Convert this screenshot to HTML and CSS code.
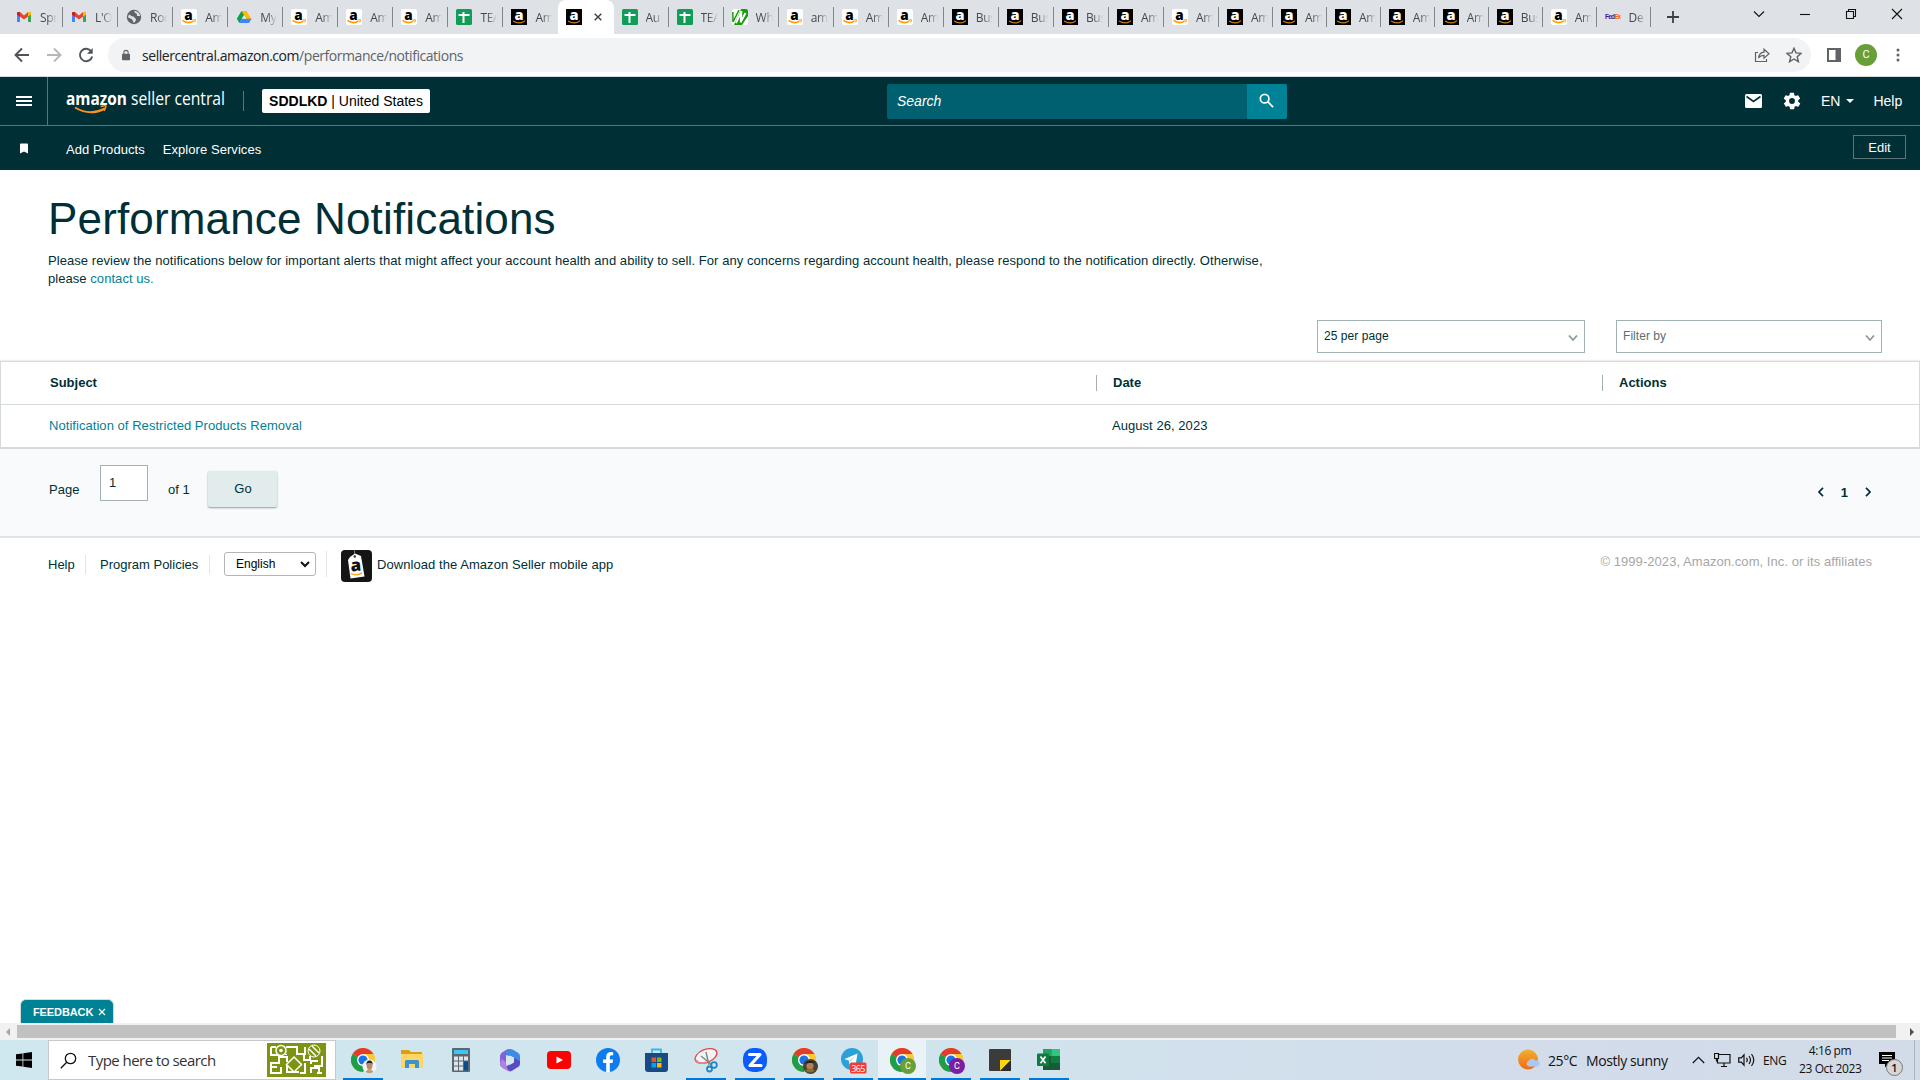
FILE: index.html
```html
<!DOCTYPE html>
<html lang="en">
<head>
  <meta charset="UTF-8">
  <title>Performance Notifications</title>
  <link rel="stylesheet" href="styles.css">
</head>
<body>
  <!-- shared icons -->
  <svg class="sprite" width="0" height="0">
    <symbol id="i-gmail" viewBox="0 0 16 16">
      <path d="M1 4v9h3V7z" fill="#4285f4"/>
      <path d="M12 7v6h3V4z" fill="#34a853"/>
      <path d="M1 3.500L4 3l4 3.400L12 3l3 .5v2L8 10.600 1 5.500z" fill="#ea4335"/>
      <path d="M12 3l3 .3V5.500L12 7.700z" fill="#fbbc04"/>
      <path d="M1 3.300L4 3v4.700L1 5.500z" fill="#c5221f"/>
    </symbol>
    <symbol id="i-globe" viewBox="0 0 16 16">
      <circle cx="8" cy="8" r="7.200" fill="#5f6368"/>
      <path d="M3 5.500c2 .5 2 2 4 2s1 2 2.500 2 0 3-1.500 4.500C6.500 12 7 11 5.500 10S2 9 2 8zM8.500 2c-.5 2 1 2 2 2.500S10 7 12 7s2 .5 2.200 0C14 4.500 11.500 2 8.500 2z" fill="#dee1e6"/>
    </symbol>
    <symbol id="i-amz" viewBox="0 0 16 16">
      <rect width="16" height="16" rx="2" fill="#fff"/>
      <text x="7.500" y="10.500" class="glyph" font-size="13.500" fill="#000">a</text>
      <path d="M1.500 11.300q5.500 4.200 11 .8" fill="none" stroke="#f90" stroke-width="1.500"/>
      <path d="M11.500 11l3-.3-.7 2.800" fill="none" stroke="#f90"/>
    </symbol>
    <symbol id="i-amzb" viewBox="0 0 16 16">
      <rect width="16" height="16" fill="#000"/>
      <text x="8" y="10.800" class="glyph" font-size="14.500" fill="#fff">a</text>
      <path d="M2 12q5.500 3.600 11 .5l.8-1" fill="none" stroke="#c47a1a" stroke-width="1.200"/>
    </symbol>
    <symbol id="i-drive" viewBox="0 0 16 16">
      <path d="M5.500 2h5L8 6.300 3.300 14 .8 9.800z" fill="#0f9d58"/>
      <path d="M5.500 2h5l5 8h-5z" fill="#ffba00"/>
      <path d="M5.500 9.800h10L13 14H3.200z" fill="#4285f4"/>
      <path d="M8 6.200l2.200 3.600H5.800z" fill="#dee1e6"/>
    </symbol>
    <symbol id="i-sheet" viewBox="0 0 16 16">
      <rect width="16" height="16" rx="1.500" fill="#0f9d58"/>
      <path d="M2.500 6h11M7.500 3v11" stroke="#fff" stroke-width="2"/>
    </symbol>
    <symbol id="i-w" viewBox="0 0 16 16">
      <rect width="16" height="16" rx="2" fill="#fff"/>
      <path d="M9 0h5a2 2 0 0 1 2 2v5l-6 9H2l3-7z" fill="#1a9a0c"/>
      <path d="M.8 3L1 13M1 13L7 1" fill="none" stroke="#1a9a0c" stroke-width="1.500"/>
      <path d="M9.500 2L4 14M13.500 4L8.500 13.500M9.500 2l-.8 11" fill="none" stroke="#fff" stroke-width="1.900"/>
    </symbol>
    <symbol id="i-fedex" viewBox="0 0 16 16">
      <text x="0" y="10.300" font-family="Liberation Sans" font-weight="bold" font-size="6.500" textLength="10" fill="#4d148c">Fed</text>
      <text x="9.500" y="10.300" font-family="Liberation Sans" font-weight="bold" font-size="6.500" textLength="6.500" fill="#f60">Ex</text>
    </symbol>
    <symbol id="i-chrome" viewBox="0 0 24 24">
      <circle cx="12" cy="12" r="12" fill="#fbbc04"/>
      <path d="M12 12L1.600 6A12 12 0 0 1 22.400 6z" fill="#e33b2e"/>
      <path d="M12 12L1.600 6A12 12 0 0 0 12 24l5.500-9z" fill="#1e9e4a"/>
      <path d="M12 6h10.400A12 12 0 0 1 12 24l5.500-9z" fill="#fcc934"/>
      <circle cx="12" cy="12" r="6" fill="#fff"/>
      <circle cx="12" cy="12" r="4.600" fill="#1a73e8"/>
    </symbol>
  </svg>

  <div class="tabs">
    <div class="tab"><svg><use href="#i-gmail"/></svg><span>Spr</span></div>
    <div class="tab"><svg><use href="#i-gmail"/></svg><span>L'O</span></div>
    <div class="tab"><svg><use href="#i-globe"/></svg><span>Roc</span></div>
    <div class="tab"><svg><use href="#i-amz"/></svg><span>Am</span></div>
    <div class="tab"><svg><use href="#i-drive"/></svg><span>My</span></div>
    <div class="tab"><svg><use href="#i-amz"/></svg><span>Am</span></div>
    <div class="tab"><svg><use href="#i-amz"/></svg><span>Am</span></div>
    <div class="tab"><svg><use href="#i-amz"/></svg><span>Am</span></div>
    <div class="tab"><svg><use href="#i-sheet"/></svg><span>TEA</span></div>
    <div class="tab before-active"><svg><use href="#i-amzb"/></svg><span>Am</span></div>
    <div class="tab active"><svg><use href="#i-amzb"/></svg><svg class="tab-close" viewBox="0 0 8 8"><path d="M.7.7l6.600 6.600M7.300.7L.7 7.300"/></svg></div>
    <div class="tab"><svg><use href="#i-sheet"/></svg><span>Au</span></div>
    <div class="tab"><svg><use href="#i-sheet"/></svg><span>TEA</span></div>
    <div class="tab"><svg><use href="#i-w"/></svg><span>Wh</span></div>
    <div class="tab"><svg><use href="#i-amz"/></svg><span>am</span></div>
    <div class="tab"><svg><use href="#i-amz"/></svg><span>Am</span></div>
    <div class="tab"><svg><use href="#i-amz"/></svg><span>Am</span></div>
    <div class="tab"><svg><use href="#i-amzb"/></svg><span>Bus</span></div>
    <div class="tab"><svg><use href="#i-amzb"/></svg><span>Bus</span></div>
    <div class="tab"><svg><use href="#i-amzb"/></svg><span>Bus</span></div>
    <div class="tab"><svg><use href="#i-amzb"/></svg><span>Am</span></div>
    <div class="tab"><svg><use href="#i-amz"/></svg><span>Am</span></div>
    <div class="tab narrow"><svg><use href="#i-amzb"/></svg><span>Am</span></div>
    <div class="tab narrow"><svg><use href="#i-amzb"/></svg><span>Am</span></div>
    <div class="tab narrow"><svg><use href="#i-amzb"/></svg><span>Am</span></div>
    <div class="tab narrow"><svg><use href="#i-amzb"/></svg><span>Am</span></div>
    <div class="tab narrow"><svg><use href="#i-amzb"/></svg><span>Am</span></div>
    <div class="tab narrow"><svg><use href="#i-amzb"/></svg><span>Bus</span></div>
    <div class="tab narrow"><svg><use href="#i-amz"/></svg><span>Am</span></div>
    <div class="tab narrow"><svg><use href="#i-fedex"/></svg><span>De</span></div>
    <svg class="new-tab" viewBox="0 0 12 12"><path d="M6 0v12M0 6h12"/></svg>
    <div class="win-btns">
      <svg viewBox="0 0 12 12"><path d="M1 3.500l5 5 5-5"/></svg>
      <svg viewBox="0 0 12 12"><path d="M1 6.500h10"/></svg>
      <svg viewBox="0 0 12 12"><path d="M1.500 3.500h7v7h-7zM3.500 3.500v-2h7v7h-2"/></svg>
      <svg viewBox="0 0 12 12"><path d="M1 1l10 10M11 1L1 11"/></svg>
    </div>
  </div>

  <div class="toolbar">
    <svg class="nav" viewBox="0 0 16 16"><path d="M15 8H2M8 1.500L1.500 8 8 14.500"/></svg>
    <svg class="nav off" viewBox="0 0 16 16"><path d="M1 8h13M8 1.500L14.500 8 8 14.500"/></svg>
    <svg class="nav" viewBox="0 0 16 16"><path d="M13.300 4.500A6.200 6.200 0 1 0 14.200 9.500"/><path d="M14.700 1v5.700H9z" class="solid"/></svg>
    <div class="omnibox">
      <svg class="lock" viewBox="0 0 10 13"><path d="M1 5h8a1 1 0 0 1 1 1v6a1 1 0 0 1-1 1H1a1 1 0 0 1-1-1V6a1 1 0 0 1 1-1z" fill="#5f6368"/><path d="M2.300 5.500V3.400a2.700 2.700 0 0 1 5.400 0v2.100" fill="none" stroke="#5f6368" stroke-width="1.300"/></svg>
      <span class="url"><b>sellercentral.amazon.com</b>/performance/notifications</span>
      <svg class="share" viewBox="0 0 16 16"><path d="M4 5.500H1.500v9h11V12"/><path d="M4.500 11C5 7.500 7 5.500 10 5.200V2.200l5 4.600-5 4.400V8.300c-2.500 0-4.200.9-5.500 2.700z"/></svg>
      <svg class="star" viewBox="0 0 16 16"><path d="M8 1.300l2 4.600 5 .5-3.800 3.300 1.200 5L8 12l-4.400 2.700 1.200-5L1 6.400l5-.5z"/></svg>
    </div>
    <svg class="panel" viewBox="0 0 14 14"><path d="M1 1h12v12H1z" fill="none" stroke="#5f6368" stroke-width="2"/><path d="M8.500 1H13v12H8.500z" fill="#5f6368"/></svg>
    <span class="avatar">C</span>
    <svg class="dots" viewBox="0 0 4 14"><circle cx="2" cy="2" r="1.500"/><circle cx="2" cy="7" r="1.500"/><circle cx="2" cy="12" r="1.500"/></svg>
  </div>

  <header class="header">
    <div class="burger"><i></i><i></i><i></i></div>
    <svg class="logo" width="164" height="32" viewBox="0 0 164 32">
      <text x="3" y="20" font-weight="700" font-size="18" textLength="61" lengthAdjust="spacingAndGlyphs">amazon</text>
      <text x="68" y="20" font-size="18.500" textLength="94" lengthAdjust="spacingAndGlyphs">seller central</text>
      <path d="M12 22.500q15 9 30 1" fill="none" stroke="#f79421" stroke-width="2"/>
      <path d="M37.500 21.500q6-1.500 5.500 0t-2 4.500" fill="none" stroke="#f79421" stroke-width="1.400"/>
    </svg>
    <span class="logo-line"></span>
    <div class="account"><b>SDDLKD</b> | United States</div>
    <div class="search">
      <span>Search</span>
      <div class="search-btn"><svg viewBox="0 0 16 16"><circle cx="6" cy="6" r="4.600"/><path d="M9.300 9.300l5.700 5.700"/></svg></div>
    </div>
    <svg class="mail" viewBox="0 0 17 14"><rect width="17" height="14" rx="1.500" fill="#fff"/><path d="M1.500 2.500l7 5 7-5" fill="none" stroke="#002f36" stroke-width="1.600"/></svg>
    <svg class="gear" viewBox="0 0 24 24"><path fill="#fff" fill-rule="evenodd" d="M19.400 13a7.500 7.500 0 0 0 0-2l2.100-1.600a.5.5 0 0 0 .1-.6l-2-3.500a.5.5 0 0 0-.6-.2l-2.500 1a7.300 7.300 0 0 0-1.700-1l-.4-2.600a.5.500 0 0 0-.5-.5h-4a.5.500 0 0 0-.5.500L9 5.100a7.300 7.300 0 0 0-1.700 1l-2.500-1a.5.500 0 0 0-.6.200l-2 3.500a.5.500 0 0 0 .1.600L4.600 11a7.500 7.500 0 0 0 0 2l-2.100 1.600a.5.500 0 0 0-.1.600l2 3.500c.1.200.4.300.6.200l2.500-1c.5.400 1.100.7 1.700 1l.4 2.600c0 .3.200.5.500.5h4c.300 0 .5-.2.500-.5l.4-2.600a7.300 7.300 0 0 0 1.700-1l2.500 1c.2.100.5 0 .6-.2l2-3.500a.5.500 0 0 0-.1-.6zM12 15.500a3.500 3.500 0 1 1 0-7 3.500 3.500 0 0 1 0 7z"/></svg>
    <span class="lang">EN<i></i></span>
    <span class="help">Help</span>
  </header>

  <nav class="favs">
    <svg class="bookmark" viewBox="0 0 9 11"><path d="M1 0h7a1 1 0 0 1 1 1v10L4.500 8.800 0 11V1a1 1 0 0 1 1-1z" fill="#fff"/></svg>
    <a>Add Products</a>
    <a>Explore Services</a>
    <button class="edit">Edit</button>
  </nav>

  <main>
    <h1>Performance Notifications</h1>
    <p class="intro">Please review the notifications below for important alerts that might affect your account health and ability to sell. For any concerns regarding account health, please respond to the notification directly. Otherwise,<br>please <a>contact us.</a></p>

    <div class="filters">
      <div class="select">25 per page<svg viewBox="0 0 10 8"><path d="M1 1.500l4 4.500 4-4.500"/></svg></div>
      <div class="select empty">Filter by<svg viewBox="0 0 10 8"><path d="M1 1.500l4 4.500 4-4.500"/></svg></div>
    </div>

    <div class="grid">
      <div class="row head">
        <div>Subject</div>
        <div>Date</div>
        <div>Actions</div>
      </div>
      <div class="row">
        <div><a>Notification of Restricted Products Removal</a></div>
        <div>August 26, 2023</div>
        <div></div>
      </div>
    </div>

    <div class="pager">
      <span class="page-label">Page</span>
      <div class="page-input">1</div>
      <span class="page-of">of 1</span>
      <div class="go">Go</div>
      <div class="pages">
        <svg viewBox="0 0 6 10"><path d="M5 .8L1 5l4 4.200"/></svg>
        <b>1</b>
        <svg viewBox="0 0 6 10"><path d="M1 .8L5 5 1 9.200"/></svg>
      </div>
    </div>
  </main>

  <footer class="footer">
    <span class="f-help">Help</span>
    <span class="f-policy">Program Policies</span>
    <div class="f-lang"><div class="f-select">English<svg viewBox="0 0 10 7"><path d="M1 1l4 4 4-4"/></svg></div></div>
    <svg class="app" width="31" height="32" viewBox="0 0 31 32">
      <rect width="31" height="32" rx="4" fill="#151515"/>
      <path d="M13.500 0v5" stroke="#777"/>
      <path d="M9 7l5-3.500L20 6l3.500 20.500L9.500 28.500 7 10z" fill="#fff"/>
      <circle cx="13.800" cy="6.500" r="1.200" fill="#333"/>
      <text x="15" y="21" class="glyph" font-size="17" fill="#111" transform="rotate(-5 15 18)">a</text>
      <path d="M10 23.500q6 3 11-.8" fill="none" stroke="#f90" stroke-width="1.300"/>
    </svg>
    <span class="f-app">Download the Amazon Seller mobile app</span>
    <span class="copy">© 1999-2023, Amazon.com, Inc. or its affiliates</span>
  </footer>

  <div class="feedback">FEEDBACK<svg viewBox="0 0 8 8"><path d="M1 1l6 6M7 1L1 7"/></svg></div>

  <div class="scrollbar"><i class="left"></i><div class="thumb"></div><i class="right"></i></div>

  <div class="taskbar">
    <div class="start"><svg viewBox="0 0 16 16"><path d="M0 2.300L6.500 1.400v6.200H0zM7.300 1.300L16 0v7.600H7.300zM0 8.400h6.500v6.200L0 13.700zM7.300 8.400H16V16l-8.700-1.200z"/></svg></div>
    <div class="type-here">
      <svg class="mag" viewBox="0 0 17 17"><circle cx="10.500" cy="6.500" r="5.200"/><path d="M6.700 10.300L.8 16.200"/></svg>
      <span>Type here to search</span>
      <svg class="maze" viewBox="0 0 59 34">
        <rect width="59" height="34" fill="#7d9413"/>
        <path d="M4 4h5M4 4v8h8v8H4v10h10v-6M19 4h11v7h8V4M19 12v-1M12 14h8v5M37 11v6h7M20 29h12M38 20v10h-5M43 17v-4M44 30v-5h8v5M55 13v10h-8M55 30h-5M44 21v-3h7M20 21v9M4 24h6" fill="none" stroke="#fff" stroke-width="2"/>
        <circle cx="14" cy="7.500" r="5" fill="#7d9413" stroke="#fff" stroke-width="1.500"/><circle cx="14" cy="7.500" r="1.800" fill="#fff"/>
        <circle cx="47" cy="8" r="6" fill="#7d9413" stroke="#fff"/><path d="M42 6l7 7M45 3l7 7" stroke="#fff" stroke-width="1.500"/>
        <path d="M27 14l7.500 7.500L27 29l-7.500-7.500z" fill="#7d9413" stroke="#fff" stroke-width="1.500"/>
      </svg>
    </div>
    <div class="apps">
      <div class="app-icon open">
        <svg viewBox="0 0 28 28"><use href="#i-chrome" x="2" y="2" width="24" height="24"/><circle cx="20.500" cy="20.500" r="7" fill="#f4f4f4"/><path d="M16.500 25.800q4 3 8 0l-2.500-2.500h-3z" fill="#c49a78"/><ellipse cx="20.500" cy="19.500" rx="2.900" ry="4" fill="#b98a66"/><path d="M17.500 19q-.5-4.500 3-4.500t3 4.500l-1-2h-4z" fill="#222"/></svg>
      </div>
      <div class="app-icon">
        <svg viewBox="0 0 28 28"><path d="M3 4h8l2 2h11v6H3z" fill="#d9a011"/><path d="M3 8h22v14H3z" fill="#fdd667"/><path d="M7 22v-6.500a1.500 1.500 0 0 1 1.500-1.500h11a1.500 1.500 0 0 1 1.500 1.500V22h-4v-4h-6v4z" fill="#3b92d0"/></svg>
      </div>
      <div class="app-icon">
        <svg viewBox="0 0 28 28"><rect x="5" y="2" width="18" height="24" rx="1" fill="#5b6670"/><path d="M7 4h14v4H7z" fill="#3cc6f4"/><path d="M7 10.500h4v4H7zm5 0h4v4h-4zm5 0h4v4h-4zM7 15.500h4v4H7zm5 0h4v4h-4zM7 20.500h4v4H7zm5 0h4v4h-4z" fill="#dfe5ea"/><path d="M17 15.500h4v9h-4z" fill="#0a4c8c"/></svg>
      </div>
      <div class="app-icon">
        <svg viewBox="0 0 28 28"><path d="M14 3q-2-.5-4 1L6 6.500Q4 8 4 10v8q0 2 2 3l4 2 1-2q-2-2-1-5V9z" fill="#8460d8"/><path d="M14 3q2 0 3 .8l5 3Q24 8 24 10v9l-6-3v-4.500L10 9V5.500z" fill="#3f8ae2"/><path d="M24 17q0 3-2 4l-6 3.800q-2 1-4 0L6 21.500l4-1 8-4.500V12l6 3z" fill="#5a4bc2"/><path d="M4 17q0 3 2 4.500l6 3.300q1 .5 2 .5-4-3-4-9L6 13z" fill="#b27fe4"/><path d="M14 9.500l4 2.300v4.600L14 18.700l-4-2.300v-4.600z" fill="#d5e7ee"/></svg>
      </div>
      <div class="app-icon">
        <svg viewBox="0 0 28 28"><rect x="2" y="5" width="24" height="18" rx="4" fill="#f00"/><path d="M11.500 10.500l6.500 3.500-6.500 3.500z" fill="#fff"/></svg>
      </div>
      <div class="app-icon">
        <svg viewBox="0 0 28 28"><circle cx="14" cy="14" r="12" fill="#0d7cf2"/><path d="M12.200 26v-9H9v-3.500h3.200v-2.700c0-3.200 1.800-4.800 4.600-4.800l2.400.2v3h-1.500c-1.400 0-1.900.8-1.900 1.700v2.600h3.300l-.6 3.500h-2.700v9z" fill="#fff"/></svg>
      </div>
      <div class="app-icon">
        <svg viewBox="0 0 28 28"><path d="M9 8V3.500h9V8" fill="none" stroke="#35b8f1" stroke-width="1.800"/><path d="M2 7h23v16a3 3 0 0 1-3 3H5a3 3 0 0 1-3-3z" fill="#184a85"/><path d="M8.500 11.500H13V16H8.500z" fill="#f25022"/><path d="M14 11.500h4.500V16H14z" fill="#7fba00"/><path d="M8.500 17H13v4.500H8.500z" fill="#00a4ef"/><path d="M14 17h4.500v4.500H14z" fill="#ffb900"/></svg>
      </div>
      <div class="app-icon open">
        <svg viewBox="0 0 28 28"><ellipse cx="14" cy="10" rx="11.500" ry="6.500" transform="rotate(-22 14 10)" fill="#f5f5f7" stroke="#e4474d" stroke-width="1.300"/><path d="M4 14q3 5 11 2" fill="none" stroke="#e4878b" stroke-width="1.500"/><path d="M14 6l3 13M9 10l11 9" stroke="#888" stroke-width="1.500"/><circle cx="22" cy="19" r="2.800" fill="none" stroke="#1d86c9" stroke-width="1.800"/><circle cx="17.500" cy="23" r="2.500" fill="none" stroke="#1d86c9" stroke-width="1.800"/></svg>
      </div>
      <div class="app-icon open">
        <svg viewBox="0 0 28 28"><rect x="2" y="2" width="24" height="24" rx="10" fill="#0b5cff"/><path d="M8.500 8.500h10.500L9 19.500h11" fill="none" stroke="#fff" stroke-width="3.200" stroke-linejoin="round" stroke-linecap="round"/></svg>
      </div>
      <div class="app-icon open">
        <svg viewBox="0 0 28 28"><use href="#i-chrome" x="2" y="2" width="24" height="24"/><circle cx="20.500" cy="20.500" r="7.500" fill="#4b4230"/><circle cx="20" cy="20" r="3.500" fill="#b4825a"/><path d="M14 17.500q5-5 12-1l-6 .5z" fill="#22251c"/><path d="M15 24.500q5-4 10 0-5 4-10 0z" fill="#8c6d33"/></svg>
      </div>
      <div class="app-icon open">
        <svg viewBox="0 0 28 28"><circle cx="13" cy="13" r="11" fill="#2aa1da"/><path d="M5.500 13l13-5.500-2 12-4-3-2 2-.5-3.700z" fill="#fff"/><path d="M10 14.800l6.500-5.300-4.500 6z" fill="#b9dcee"/><rect x="11" y="16.500" width="16.500" height="11" rx="1.500" fill="#f23c34"/><text x="19.300" y="25.500" text-anchor="middle" font-family="Open Sans" font-size="9" textLength="14" fill="#fff">365</text></svg>
      </div>
      <div class="app-icon open current">
        <svg viewBox="0 0 28 28"><use href="#i-chrome" x="2" y="2" width="24" height="24"/><circle cx="20" cy="20" r="8" fill="#689f38"/><text x="20" y="23.300" text-anchor="middle" font-family="Roboto" font-size="9" fill="#fff">C</text></svg>
      </div>
      <div class="app-icon open">
        <svg viewBox="0 0 28 28"><use href="#i-chrome" x="2" y="2" width="24" height="24"/><circle cx="20" cy="20" r="8" fill="#7b1fa2"/><text x="20" y="23.300" text-anchor="middle" font-family="Roboto" font-size="9" fill="#fff">C</text></svg>
      </div>
      <div class="app-icon open">
        <svg viewBox="0 0 28 28"><rect x="3" y="3" width="22" height="22" rx="1" fill="#3b3b3b"/><path d="M14 14h11L14 25z" fill="#fcd60a"/><path d="M25 14v11H14z" fill="#2b2b2b"/></svg>
      </div>
      <div class="app-icon open">
        <svg viewBox="0 0 28 28"><path d="M8 3h17v21H8z" fill="#21a366"/><path d="M16.500 3H25v7h-8.500z" fill="#33c481"/><path d="M8 3h8.500v7H8z" fill="#21a366"/><path d="M8 10h8.500v7H8zM16.500 17H25v7H8v-7z" fill="#185c37"/><path d="M16.500 10H25v7h-8.500z" fill="#107c41"/><rect x="2" y="7.500" width="12" height="12.500" rx="1" fill="#107c41"/><path d="M5.500 10.500l5 6.800M10.500 10.500l-5 6.800" stroke="#fff" stroke-width="1.700"/></svg>
      </div>
    </div>
    <div class="tray">
      <svg class="weather" viewBox="0 0 22 22"><defs><linearGradient id="sun" x1="0" y1="0" x2="0" y2="1"><stop offset="0" stop-color="#f0b030"/><stop offset="1" stop-color="#f26a13"/></linearGradient></defs><circle cx="10" cy="10.500" r="10" fill="url(#sun)"/><path d="M10.500 17.500a3 3 0 0 1 0-5.500 4 4 0 0 1 7-.5 3 3 0 0 1 2 6z" fill="#a9c8f5"/></svg>
      <span class="temp">25°C</span>
      <span class="cond">Mostly sunny</span>
      <svg class="up" viewBox="0 0 13 8"><path d="M.8 7l5.700-5.700L12.200 7"/></svg>
      <svg class="net" viewBox="0 0 17 15"><path d="M5 1.500h11v8.500H3.500V6M7 13.500h6M10 10v3.500M.5.500h4v5h-4zM2.500 5.500v3"/></svg>
      <svg class="vol" viewBox="0 0 17 14"><path d="M.7 4.800h2.600L6 1.800v10.400l-2.700-3H.7zM8.500 4.800q1.500 2.200 0 4.400M11 3q3 4 0 8M13.500 1q4.500 6 0 12"/></svg>
      <span class="kb">ENG</span>
      <div class="clock"><span>4:16 pm</span><span>23 Oct 2023</span></div>
      <div class="notif"><svg viewBox="0 0 16 16"><path d="M0 0h16v12H9l-3 3.500V12H0z"/><path d="M3 3.500h10M3 6h10M3 8.500h7" stroke="#fff"/></svg><span>1</span></div>
    </div>
  </div>
</body>
</html>
```

FILE: styles.css
```css
* { box-sizing: border-box; }
body {
  margin: 0;
  width: 1920px;
  height: 1080px;
  overflow: hidden;
  display: flex;
  flex-direction: column;
  font-family: "Liberation Sans", Arial, sans-serif;
  font-size: 13px;
  color: #002f36;
  background: #fff;
}
svg { display: block; flex: none; }
.sprite { display: none; }
.glyph { font-family: "Open Sans", sans-serif; font-weight: 800; text-anchor: middle; }
a { color: #008296; text-decoration: none; }

/* browser tabs */
.tabs { display: flex; height: 34px; padding-left: 8px; background: #dee1e6; flex: none; }
.tab { position: relative; width: 55.05px; display: flex; align-items: center; padding-left: 8px; flex: none; }
.tab.narrow { width: 53.95px; }
.tab::after { content: ""; position: absolute; right: 0; top: 7px; width: 1px; height: 20px; background: #80868b; }
.tab.before-active::after, .tab.active::after { display: none; }
.tab svg { width: 16px; height: 16px; }
.tab span {
  width: 17px;
  margin-left: 8px;
  overflow: hidden;
  white-space: nowrap;
  font: 12px "Open Sans", sans-serif;
  letter-spacing: -.3px;
  color: #45494d;
  -webkit-mask-image: linear-gradient(90deg, #000 40%, transparent);
  mask-image: linear-gradient(90deg, #000 40%, transparent);
}
.tab.active { background: #fff; border-radius: 8px 8px 0 0; }
.tab .tab-close { width: 8px; height: 8px; margin-left: 12px; fill: none; stroke: #3c4043; stroke-width: 1.4; }
.new-tab { width: 12px; height: 12px; margin: 11px 0 0 16px; stroke: #3c4043; stroke-width: 1.8; }
.win-btns { display: flex; gap: 34px; margin-left: auto; padding: 8px 17px 0 0; }
.win-btns svg { width: 12px; height: 12px; fill: none; stroke: #111; stroke-width: 1.1; }

/* address bar */
.toolbar { display: flex; align-items: center; height: 43px; padding-left: 14px; border-bottom: 1px solid #d5d8dc; flex: none; }
.nav { width: 16px; height: 16px; margin-right: 16px; fill: none; stroke: #505357; stroke-width: 1.9; }
.nav .solid { fill: #505357; stroke: none; }
.nav.off { stroke: #b5b8bb; }
.omnibox { display: flex; align-items: center; width: 1703px; height: 34px; margin-left: -2px; padding: 0 9px 0 14px; border-radius: 17px; background: #f1f3f4; }
.lock { width: 8px; height: 12px; }
.url { margin-left: 12px; font: 14px "Open Sans", sans-serif; letter-spacing: -.45px; color: #5f6368; }
.url b { font-weight: 400; color: #202124; }
.share { width: 16px; height: 16px; margin-left: auto; fill: none; stroke: #5f6368; stroke-width: 1.2; }
.star { width: 16px; height: 16px; margin-left: 16px; fill: none; stroke: #5f6368; stroke-width: 1.4; }
.panel { width: 14px; height: 14px; margin-left: 16px; }
.avatar { width: 22px; height: 22px; margin-left: 14px; border-radius: 50%; background: #689f38; color: #fff; font: 11px/22px Roboto, sans-serif; text-align: center; }
.dots { width: 4px; height: 14px; margin-left: 19px; fill: #5f6368; }

/* seller central header */
.header { display: flex; align-items: center; height: 49px; background: #002f36; border-bottom: 1px solid #5b7578; color: #fff; font-size: 14px; flex: none; }
.burger { width: 48px; height: 48px; padding: 19px 0 0 16px; border-right: 1px solid #5b7578; }
.burger i { display: block; width: 16px; height: 2px; margin-bottom: 2px; background: #fff; }
.logo { margin-left: 15px; fill: #fff; font-family: "Open Sans", sans-serif; }
.logo-line { width: 1px; height: 20px; margin-left: 16px; background: #5b7578; }
.account { width: 168px; height: 24px; margin-left: 18px; border-radius: 2px; background: #fff; color: #000; line-height: 24px; text-align: center; white-space: nowrap; }
.search { display: flex; align-items: center; width: 400px; height: 35px; margin-left: 457px; background: #00606f; border-radius: 2px; font-style: italic; }
.search span { flex: 1; padding-left: 10px; }
.search-btn { width: 40px; height: 35px; padding: 9px 0 0 12px; background: #008296; border-radius: 0 2px 2px 0; }
.search-btn svg { width: 15px; height: 15px; fill: none; stroke: #fff; stroke-width: 1.8; }
.mail { width: 17px; height: 14px; margin-left: 458px; }
.gear { width: 20px; height: 20px; margin-left: 20px; }
.lang { display: flex; align-items: center; margin-left: 19px; }
.lang i { margin-left: 6px; border: 4px solid transparent; border-top-color: #fff; border-bottom: 0; }
.help { margin-left: 19px; }

.favs { display: flex; align-items: center; height: 44px; padding: 0 14px 0 20px; background: #002f36; flex: none; }
.favs a { color: #fff; margin: 2px 18px 0 0; letter-spacing: .06px; }
.bookmark { width: 8px; height: 11px; margin-right: 38px; }
.edit { width: 53px; height: 24px; margin: 0 0 2px auto; padding: 0; border: 1px solid #5b7578; background: none; color: #fff; font: 13px "Liberation Sans", Arial, sans-serif; }

/* page */
main { flex: none; }
h1 { margin: 22px 0 0 48px; font-size: 44px; line-height: 54px; font-weight: 400; letter-spacing: .16px; }
.intro { margin: 6px 0 0 48px; line-height: 18px; letter-spacing: .055px; white-space: nowrap; }
.filters { display: flex; gap: 31px; justify-content: flex-end; padding: 32px 38px 8px 0; }
.select { display: flex; align-items: center; width: 268px; height: 33px; padding: 0 6px 2px; border: 1px solid #a2b2b4; font-size: 12px; letter-spacing: .05px; }
.select.empty { width: 266px; color: #5b6f72; }
.select svg { width: 10px; height: 8px; margin: 5px 0 0 auto; fill: none; stroke: #8a999b; stroke-width: 1.8; }
.grid { border: 1px solid #d5dbdb; border-bottom: 2px solid #d5dbdb; box-shadow: 0 -1px 1px #eee; letter-spacing: .05px; }
.row { display: grid; grid-template-columns: 1095px 506px 1fr; align-items: center; height: 42px; }
.row > div { padding-left: 16px; padding-bottom: 2px; }
.row > div:first-child { padding-left: 48px; }
.row.head { height: 43px; border-bottom: 1px solid #d5dbdb; font-weight: 700; letter-spacing: 0; }
.row.head > div + div { height: 16px; border-left: 1px solid #a2b2b4; }
.row.head > div:first-child { padding-left: 49px; }

.pager { display: flex; height: 89px; padding-left: 49px; background: #f9fafb; border-bottom: 2px solid #e1e4e6; }
.page-label { width: 51px; padding-top: 33px; }
.page-input { width: 48px; height: 36px; margin-top: 16px; padding: 9px 0 0 8px; border: 1px solid #a2b2b4; background: #fff; }
.page-of { width: 60px; padding: 33px 0 0 20px; }
.go { width: 69px; height: 36px; margin-top: 22px; border-radius: 2px; background: #e3eced; box-shadow: 0 1px 2px #999; line-height: 35px; text-align: center; text-indent: 1px; }
.pages { display: flex; align-items: center; gap: 17px; height: 20px; margin: 33px 49px 0 auto; }
.pages svg { width: 6px; height: 10px; fill: none; stroke: #002f36; stroke-width: 1.7; }

.footer { display: flex; align-items: flex-start; padding: 12px 48px 0; flex: none; line-height: 19px; }
.f-help, .f-policy { height: 19px; margin-top: 5px; border-right: 1px solid #e2e5e6; }
.f-help { width: 38px; }
.f-policy { width: 124px; padding-left: 14px; }
.f-lang { width: 117px; height: 26px; margin-top: 1px; padding-left: 14px; border-right: 1px solid #e2e5e6; }
.f-select { display: flex; align-items: center; width: 92px; height: 24px; padding: 0 5px 0 11px; border: 1px solid #b5b5b5; border-radius: 3px; font-size: 12px; color: #000; margin-top: 1px; }
.f-select svg { width: 10px; height: 7px; margin-left: auto; fill: none; stroke: #111; stroke-width: 2; }
.app { margin-left: 14px; }
.f-app { margin: 5px 0 0 5px; letter-spacing: .06px; }
.copy { margin: 2px 0 0 auto; color: #a6a6a6; letter-spacing: .06px; }

.feedback { display: flex; align-items: center; width: 94px; height: 24px; margin: auto 0 0 20px; padding-left: 12px; border: 1px solid #d5dbdb; border-bottom: 0; border-radius: 6px 6px 0 0; background: #008296; color: #fff; font-size: 11px; font-weight: 700; letter-spacing: -.1px; flex: none; }
.feedback svg { width: 8px; height: 8px; margin-left: 5px; stroke: #fff; stroke-width: 1.2; }

.scrollbar { display: flex; align-items: center; height: 17px; background: #f1f1f1; flex: none; }
.thumb { flex: 1; height: 13px; margin: 0 14px 0 7px; background: #c1c1c1; }
.scrollbar i { border: 4px solid transparent; }
.scrollbar .left { margin-left: 6px; border-left: 0; border-right-color: #a3a3a3; }
.scrollbar .right { margin-right: 6px; border-right: 0; border-left-color: #505050; }

/* windows taskbar */
.taskbar { display: flex; height: 40px; background: linear-gradient(90deg, #cfe7ee, #d1e4ee 50%, #d2dcea 78%, #d3dbe8); color: #111; font-family: "Open Sans", "Noto Sans", sans-serif; flex: none; }
.start { width: 48px; padding: 12px 0 0 16px; }
.start svg { width: 16px; height: 16px; }
.type-here { display: flex; align-items: center; width: 288px; height: 40px; padding: 0 9px 0 11px; border: 1px solid #c5c9cb; background: #fff; font-size: 15px; letter-spacing: -.55px; color: #333; }
.mag { width: 17px; height: 17px; fill: none; stroke: #111; stroke-width: 1.3; }
.type-here span { margin-left: 11px; white-space: nowrap; }
.maze { width: 59px; height: 34px; margin-left: auto; }
.apps { display: flex; padding-left: 2px; }
.app-icon { width: 49px; height: 40px; padding: 6px 0 0 11px; position: relative; }
.app-icon svg { width: 28px; height: 28px; }
.app-icon.open::after { content: ""; position: absolute; left: 5px; bottom: 0; width: 40px; height: 2px; background: #0078d7; }
.app-icon.current { background: linear-gradient(#e9f3f7, #e9f3f7) 1px 0 / 48px 40px no-repeat; }
.app-icon.current::after { left: 1px; width: 48px; }
.tray { display: flex; align-items: center; margin-left: auto; padding-right: 5px; }
.tray svg { fill: none; stroke: #111; stroke-width: 1.2; }
.tray .weather { width: 22px; height: 22px; stroke: none; }
.temp { width: 38px; margin-left: 8px; font-size: 14px; letter-spacing: -.4px; }
.cond { width: 84px; font-size: 14px; letter-spacing: -.4px; white-space: nowrap; }
.tray .up { width: 13px; height: 8px; margin-left: 22px; }
.tray .net { width: 17px; height: 15px; margin-left: 9px; }
.tray .vol { width: 17px; height: 14px; margin-left: 7px; }
.kb { width: 23px; margin-left: 8px; font-size: 12px; letter-spacing: -.4px; }
.clock { display: flex; flex-direction: column; width: 62px; margin-left: 13px; font-size: 12px; line-height: 18px; letter-spacing: -.4px; text-align: center; white-space: nowrap; }
.notif { position: relative; width: 36px; height: 40px; padding-top: 12px; margin-left: 18px; border-right: 1px solid #a9b4c0; }
.tray .notif svg { width: 16px; height: 16px; fill: #000; stroke: none; }
.notif span { position: absolute; left: 7px; top: 19px; width: 17px; height: 17px; border: 1px solid #777; border-radius: 50%; background: #d6d6d6; font-size: 11px; font-weight: 600; line-height: 15px; text-align: center; }
```
